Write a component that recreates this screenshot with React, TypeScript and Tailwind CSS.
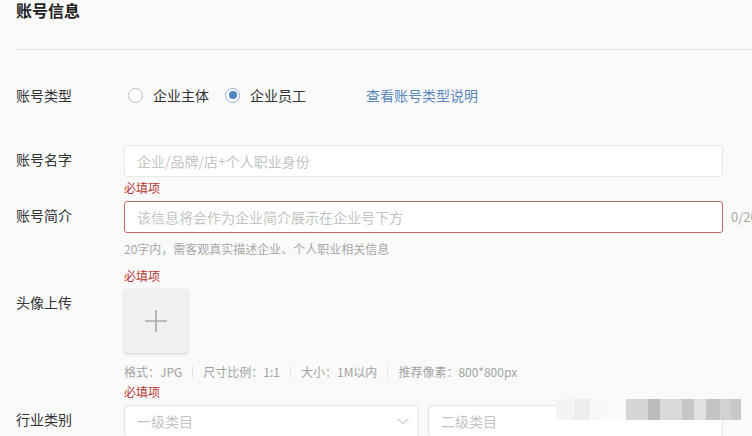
import React from 'react';

const Required: React.FC<{ mt: string }> = ({ mt }) => (
  <div className={`flex ${mt}`}>
    <div className="w-[108px] shrink-0" />
    <p className="text-[12px] leading-4 text-[#b8342e]">必填项</p>
  </div>
);

const Radio: React.FC<{ checked?: boolean; label: string }> = ({ checked, label }) => (
  <label className="flex items-center">
    {checked ? (
      <span className="w-[15px] h-[15px] rounded-full border border-[#8fb1d6] bg-white flex items-center justify-center">
        <span className="w-[8px] h-[8px] rounded-full bg-[#4f86c2]" />
      </span>
    ) : (
      <span className="w-[15px] h-[15px] rounded-full border border-[#bdbdbd] bg-white" />
    )}
    <span className="ml-[10px] text-[14px] text-[#333]">{label}</span>
  </label>
);

const App: React.FC = () => {
  return (
    <div
      className="relative w-[752px] h-[436px] overflow-hidden bg-[#fafafa] text-[#333]"
      style={{ fontFamily: '"Noto Sans CJK SC", "Noto Sans", sans-serif' }}
    >
      {/* Header */}
      <div className="ml-4 h-[50px] border-b border-[#e6e6e6]">
        <h1 className="text-[16px] leading-5 font-semibold text-[#222]">账号信息</h1>
      </div>

      <div className="pl-4">
        {/* 账号类型 */}
        <div className="flex items-center h-[32px] mt-[29px]">
          <div className="w-[108px] shrink-0 text-[14px]">账号类型</div>
          <div className="flex items-center pl-[4px] gap-[16px]">
            <Radio label="企业主体" />
            <Radio checked label="企业员工" />
          </div>
          <a className="ml-[60px] text-[14px] text-[#5a87bb]">查看账号类型说明</a>
        </div>

        {/* 账号名字 */}
        <div className="flex items-center mt-[34px]">
          <div className="w-[108px] shrink-0 text-[14px] -mt-[3px]">账号名字</div>
          <div className="w-[599px] h-[32px] bg-white border border-[#e8e8e8] rounded-[3px] flex items-center px-3 text-[14px] text-[#c4c4c4]">
            企业/品牌/店+个人职业身份
          </div>
        </div>

        <Required mt="mt-[3px]" />

        {/* 账号简介 */}
        <div className="flex items-center mt-[5px]">
          <div className="w-[108px] shrink-0 text-[14px] -mt-[3px]">账号简介</div>
          <div className="w-[599px] h-[32px] shrink-0 bg-white border border-[#c9666a] rounded-[3px] flex items-center px-3 text-[14px] text-[#c4c4c4]">
            该信息将会作为企业简介展示在企业号下方
          </div>
          <span className="ml-[8px] text-[13px] text-[#aaa] whitespace-nowrap">0/20</span>
        </div>

        <div className="flex mt-[8px]">
          <div className="w-[108px] shrink-0" />
          <p className="text-[12px] leading-4 text-[#a8a8a8]">20字内，需客观真实描述企业、个人职业相关信息</p>
        </div>

        <Required mt="mt-[11px]" />

        {/* 头像上传 */}
        <div className="flex mt-[5px]">
          <div className="w-[108px] shrink-0 text-[14px] leading-5 mt-[3px]">头像上传</div>
          <div className="w-[64px] h-[64px] rounded-[2px] bg-[#f1f1f1] shadow-[0_1px_3px_rgba(0,0,0,0.18)] flex items-center justify-center">
            <svg width="24" height="24" viewBox="0 0 24 24">
              <path d="M12 1v22M1 12h22" stroke="#a9a9a9" strokeWidth="1.6" />
            </svg>
          </div>
        </div>

        <div className="flex mt-[11px]">
          <div className="w-[108px] shrink-0" />
          <p className="text-[12px] leading-4 text-[#a3a3a3] flex items-center">
            <span>格式：JPG</span>
            <span className="mx-[10px] h-[12px] border-l border-[#e2e2e2]" />
            <span>尺寸比例：1:1</span>
            <span className="mx-[10px] h-[12px] border-l border-[#e2e2e2]" />
            <span>大小：1M以内</span>
            <span className="mx-[10px] h-[12px] border-l border-[#e2e2e2]" />
            <span>推荐像素：800*800px</span>
          </p>
        </div>

        <Required mt="mt-[4px]" />

        {/* 行业类别 */}
        <div className="flex items-center mt-[5px]">
          <div className="w-[108px] shrink-0 text-[14px] -mt-[4px]">行业类别</div>
          <div className="flex gap-[9px]">
            <div className="w-[295px] h-[32px] bg-white border border-[#e6e6e6] rounded-[3px] flex items-center justify-between pl-3 pr-[8px] text-[14px] text-[#c4c4c4]">
              <span>一级类目</span>
              <svg width="14" height="14" viewBox="0 0 14 14">
                <path d="M1.5 4.5L7 9.5l5.5-5" fill="none" stroke="#b5b5b5" strokeWidth="1" />
              </svg>
            </div>
            <div className="w-[295px] h-[32px] bg-white border border-[#e6e6e6] rounded-[3px] flex items-center pl-3 text-[14px] text-[#c4c4c4]">
              二级类目
            </div>
          </div>
        </div>
      </div>

      {/* Watermark mosaic */}
      <div className="absolute left-[556px] top-[399px] w-[185px] h-[21px] flex">
        <div className="w-[18px] bg-[#f4f4f4]" />
        <div className="w-[16px] bg-[#ededed]" />
        <div className="w-[12px] bg-[#f7f7f7]" />
        <div className="w-[24px] bg-[#fafafa]" />
        <div className="w-[22px] bg-[#d6d6d6]" />
        <div className="w-[12px] bg-[#bdbdbd]" />
        <div className="w-[22px] bg-[#dadada]" />
        <div className="w-[12px] bg-[#c6c6c6]" />
        <div className="w-[12px] bg-[#e2e2e2]" />
        <div className="w-[14px] bg-[#c4c4c4]" />
        <div className="w-[11px] bg-[#d2d2d2]" />
        <div className="w-[10px] bg-[#c9c9c9]" />
      </div>
    </div>
  );
};

export default App;
